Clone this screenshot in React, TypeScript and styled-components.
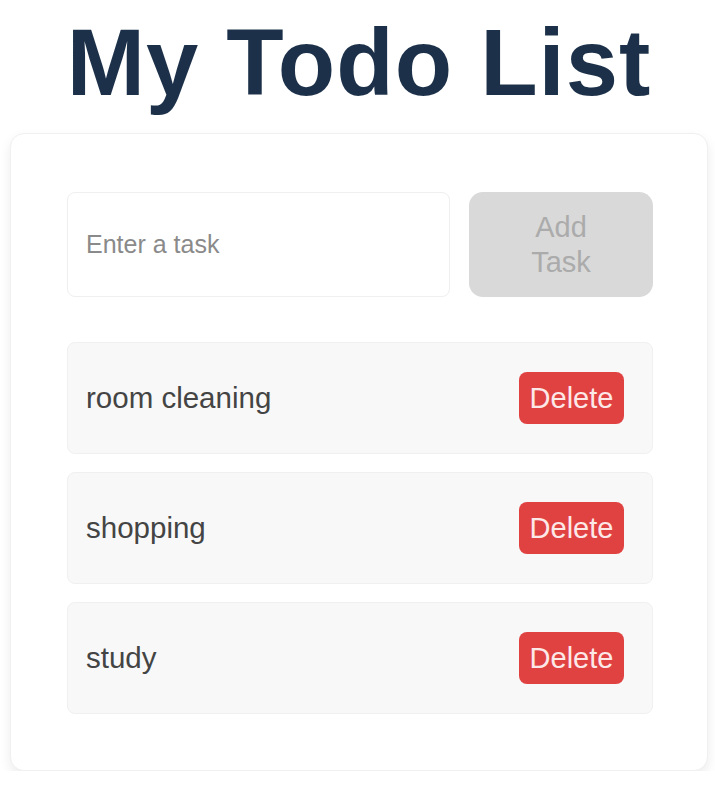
import React, { useState } from "react";
import styled, { createGlobalStyle } from "styled-components";

const GlobalStyle = createGlobalStyle`
  html, body {
    margin: 0;
    padding: 0;
    background: #ffffff;
    font-family: "Liberation Sans", Arial, sans-serif;
  }
  * { box-sizing: border-box; }
`;

const Page = styled.div`
  width: 715px;
  padding: 10px 7px 0 10px;
  display: flex;
  flex-direction: column;
`;

const Title = styled.h1`
  margin: 0;
  text-align: center;
  font-size: 94px;
  font-weight: 700;
  line-height: 105px;
  color: #1c3149;
  letter-spacing: 1px;
`;

const Card = styled.div`
  margin-top: 18px;
  background: #ffffff;
  border-radius: 14px;
  border: 1px solid #f0f0f0;
  box-shadow: 0 5px 12px rgba(0, 0, 0, 0.08);
  padding: 58px 54px 56px 56px;
  display: flex;
  flex-direction: column;
`;

const Form = styled.div`
  display: flex;
  gap: 19px;
  height: 105px;
`;

const Input = styled.input`
  flex: 1;
  height: 100%;
  border: 1.5px solid #efefef;
  border-radius: 8px;
  padding: 0 18px;
  font-family: "Liberation Sans", Arial, sans-serif;
  font-size: 25px;
  color: #333;
  background: #fff;
  outline: none;
  &::placeholder {
    color: #8a8a8a;
  }
`;

const AddButton = styled.button`
  width: 184px;
  height: 100%;
  border: none;
  border-radius: 14px;
  background: #d9d9d9;
  color: #ababab;
  font-family: "Liberation Sans", Arial, sans-serif;
  font-size: 29px;
  line-height: 35px;
  padding: 0 40px;
  text-align: center;
`;

const List = styled.ul`
  list-style: none;
  margin: 45px 0 0;
  padding: 0;
  display: flex;
  flex-direction: column;
  gap: 18px;
`;

const Item = styled.li`
  height: 112px;
  display: flex;
  align-items: center;
  justify-content: space-between;
  background: #f8f8f8;
  border: 1.5px solid #f0f0f0;
  border-radius: 8px;
  padding: 0 28px 0 18px;
`;

const ItemText = styled.span`
  font-size: 29.5px;
  color: #444444;
`;

const DeleteButton = styled.button`
  width: 105px;
  height: 52px;
  border: none;
  border-radius: 8px;
  background: #e04242;
  color: #fde8e8;
  font-family: "Liberation Sans", Arial, sans-serif;
  font-size: 29px;
  padding: 0;
`;

export default function App() {
  const [tasks, setTasks] = useState<string[]>(["room cleaning", "shopping", "study"]);
  const [value, setValue] = useState("");
  return (
    <Page>
      <GlobalStyle />
      <Title>My Todo List</Title>
      <Card>
        <Form>
          <Input
            placeholder="Enter a task"
            value={value}
            onChange={(e) => setValue(e.target.value)}
          />
          <AddButton
            disabled={!value}
            onClick={() => {
              if (value) {
                setTasks([...tasks, value]);
                setValue("");
              }
            }}
          >
            Add Task
          </AddButton>
        </Form>
        <List>
          {tasks.map((t, i) => (
            <Item key={i}>
              <ItemText>{t}</ItemText>
              <DeleteButton onClick={() => setTasks(tasks.filter((_, j) => j !== i))}>
                Delete
              </DeleteButton>
            </Item>
          ))}
        </List>
      </Card>
    </Page>
  );
}
